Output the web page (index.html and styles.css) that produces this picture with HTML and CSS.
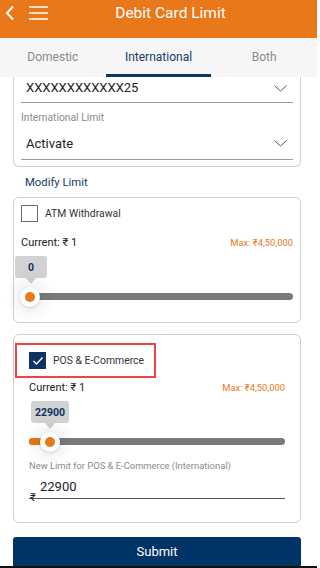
FILE: index.html
```html
<!DOCTYPE html>
<html>
<head>
<meta charset="utf-8">
<link rel="stylesheet" href="styles.css">
</head>
<body>
<div class="app">
  <header class="header">
    <svg class="back" width="10" height="16" viewBox="0 0 10 16"><path d="M8 1.5 L2 8 L8 14.5" fill="none" stroke="#fff" stroke-width="2"/></svg>
    <svg class="menu" width="19" height="14" viewBox="0 0 19 14"><path d="M0 1h19M0 7h19M0 13h19" stroke="#fff" stroke-width="1.6"/></svg>
    <h1 class="title">Debit Card Limit</h1>
  </header>
  <nav class="tabs">
    <div class="tab">Domestic</div>
    <div class="tab active">International</div>
    <div class="tab">Both</div>
  </nav>
  <main class="content">
    <section class="card card-top">
      <div class="select">
        <span>XXXXXXXXXXXX25</span>
        <svg width="13" height="7" viewBox="0 0 13 7"><path d="M0.5 0.5 L6.5 6 L12.5 0.5" fill="none" stroke="#555" stroke-width="1"/></svg>
      </div>
      <div class="label">International Limit</div>
      <div class="select select2">
        <span>Activate</span>
        <svg width="13" height="7" viewBox="0 0 13 7"><path d="M0.5 0.5 L6.5 6 L12.5 0.5" fill="none" stroke="#555" stroke-width="1"/></svg>
      </div>
    </section>
    <div class="section-title">Modify Limit</div>
    <section class="card card-atm">
      <div class="check-row">
        <span class="box"></span>
        <span class="check-label">ATM Withdrawal</span>
      </div>
      <div class="info-row">
        <span class="current">Current: ₹ 1</span>
        <span class="max">Max: ₹4,50,000</span>
      </div>
      <div class="slider">
        <div class="tip tip-atm">0</div>
        <div class="track">
          <div class="fill" style="width:0px"></div>
          <div class="thumb" style="left:1px"></div>
        </div>
      </div>
    </section>
    <section class="card card-pos">
      <div class="highlight">
        <span class="box checked">
          <svg width="12" height="10" viewBox="0 0 12 10"><path d="M1.5 5 L4.5 8 L10.5 1.5" fill="none" stroke="#fff" stroke-width="1.4"/></svg>
        </span>
        <span class="check-label">POS &amp; E-Commerce</span>
      </div>
      <div class="info-row">
        <span class="current">Current: ₹ 1</span>
        <span class="max">Max: ₹4,50,000</span>
      </div>
      <div class="slider">
        <div class="tip tip-pos">22900</div>
        <div class="track">
          <div class="fill" style="width:21px"></div>
          <div class="thumb" style="left:21px"></div>
        </div>
      </div>
      <div class="label label-new">New Limit for POS &amp; E-Commerce (International)</div>
      <div class="amount">
        <span class="value">22900</span>
        <span class="rupee">₹</span>
      </div>
    </section>
    <button class="submit">Submit</button>
  </main>
  <div class="bottom-line"></div>
</div>
</body>
</html>
```
FILE: styles.css
```css
* { box-sizing: border-box; }
html, body { margin: 0; padding: 0; background: #fff; }
body { font-family: Roboto, "Noto Sans", sans-serif; color: #222; width: 320px; height: 568px; overflow: hidden; }
.app { width: 317px; display: flex; flex-direction: column; height: 568px; }
.app > *, .content > * { flex-shrink: 0; }

.header {
  height: 38px; background: #E8781A; display: flex; align-items: flex-start;
  padding: 5px 0 0 5px;
}
.menu { margin-left: 14px; margin-top: 1px; }
.title {
  margin: 0; font-weight: 400; font-size: 15.5px; color: #fff; line-height: 16px;
  flex: 1; text-align: center; padding-right: 24px; margin-top: 0;
}

.tabs { height: 39px; background: #f6f6f6; display: flex; }
.tab {
  flex: 1; text-align: center; font-size: 12px; color: #8a8a8a;
  line-height: 12px; padding-top: 13px; border-bottom: 3px solid transparent;
}
.tab.active { color: #163a66; border-bottom-color: #0e3461; }

.content { display: flex; flex-direction: column; padding: 0 16px 0 13px; flex: 1; }

.card { border: 1px solid #cfcfcf; border-radius: 6px; padding: 0 7px; }
.card-top { border-top: none; border-radius: 0 0 6px 6px; height: 90px; }
.select {
  height: 26px; border-bottom: 1px solid #9a9a9a; display: flex; align-items: center;
  justify-content: space-between; padding: 0 6px 4px 5px; font-size: 13px; color: #222;
}
.select svg { margin-top: 1px; }
.select2 { height: 36px; padding-bottom: 0; align-items: flex-start; padding-top: 12px; }
.select2 svg { margin-top: 4px; }
.label { font-size: 10.3px; color: #8a8a8a; line-height: 12px; margin-top: 9px; }

.section-title { font-size: 11.3px; color: #163a66; line-height: 14px; margin: 9px 0 0 12px; height: 21px; }

.card-atm { height: 126px; }
.check-row { display: flex; align-items: center; margin-top: 7px; height: 17px; }
.box {
  width: 17px; height: 17px; border: 1px solid #6d6d6d; display: inline-flex;
  align-items: center; justify-content: center; flex: none;
}
.box.checked { background: #0d3363; border-color: #0d3363; }
.check-label { font-size: 10.4px; color: #333; margin-left: 7px; }
.info-row { display: flex; justify-content: space-between; align-items: center; height: 16px; margin-top: 12px; }
.current { font-size: 11px; color: #222; }
.max { font-size: 9.4px; color: #E8781A; }

.slider { position: relative; margin-top: 6px; padding-left: 8px; }
.tip {
  position: relative; background: #d2d2d2; border-radius: 3px; height: 22px;
  display: flex; align-items: center; justify-content: center;
  font-size: 10.5px; font-weight: 700; color: #0e3461;
}
.tip::after {
  content: ""; position: absolute; left: 50%; bottom: -6px; margin-left: -5px;
  border-left: 5px solid transparent; border-right: 5px solid transparent; border-top: 6px solid #d2d2d2;
}
.tip-atm { width: 32px; margin-left: -14px; }
.tip-pos { width: 38px; margin-left: 2px; }
.track { position: relative; height: 7px; background: #7a7a7a; border-radius: 4px; margin-top: 15px; }
.fill { position: absolute; left: 0; top: 0; bottom: 0; background: #E8781A; border-radius: 4px 0 0 4px; }
.thumb {
  position: absolute; top: 50%; width: 20px; height: 20px; margin: -10px 0 0 -10px;
  background: #fff; border-radius: 50%;
  box-shadow: 0 0 12px 8px rgba(0,0,0,0.05), 0 1px 3px rgba(0,0,0,0.15);
}
.thumb::after {
  content: ""; position: absolute; left: 5px; top: 5px; width: 10px; height: 10px;
  background: #E8781A; border-radius: 50%;
}

.card-pos { margin-top: 11px; height: 189px; }
.highlight {
  display: flex; align-items: center; border: 2px solid #EE4343;
  width: 141px; height: 35px; margin: 8px 0 0 -6px; padding-left: 12px;
}
.card-pos .info-row { margin: 1px 8px 0 8px; }
.card-pos .slider { margin: 6px 8px 0 8px; padding-left: 0; }
.label-new { font-size: 9.4px; color: #8a8a8a; margin: 14px 0 0 8px; line-height: 13px; }
.amount { position: relative; margin: 7px 8px 0 8px; height: 20px; border-bottom: 1px solid #555; }
.value { font-size: 13px; color: #222; margin-left: 11px; line-height: 16px; display: block; }
.rupee { position: absolute; left: 1px; top: 13px; font-size: 11px; color: #222; line-height: 12px; }

.submit {
  margin-top: 14px; height: 29px; border: none; border-radius: 3px 3px 0 0; background: #003466;
  color: #fff; font-family: Roboto, sans-serif; font-size: 13px; padding: 0; line-height: 29px;
}
.bottom-line { height: 2px; background: #111; width: 317px; }
```
